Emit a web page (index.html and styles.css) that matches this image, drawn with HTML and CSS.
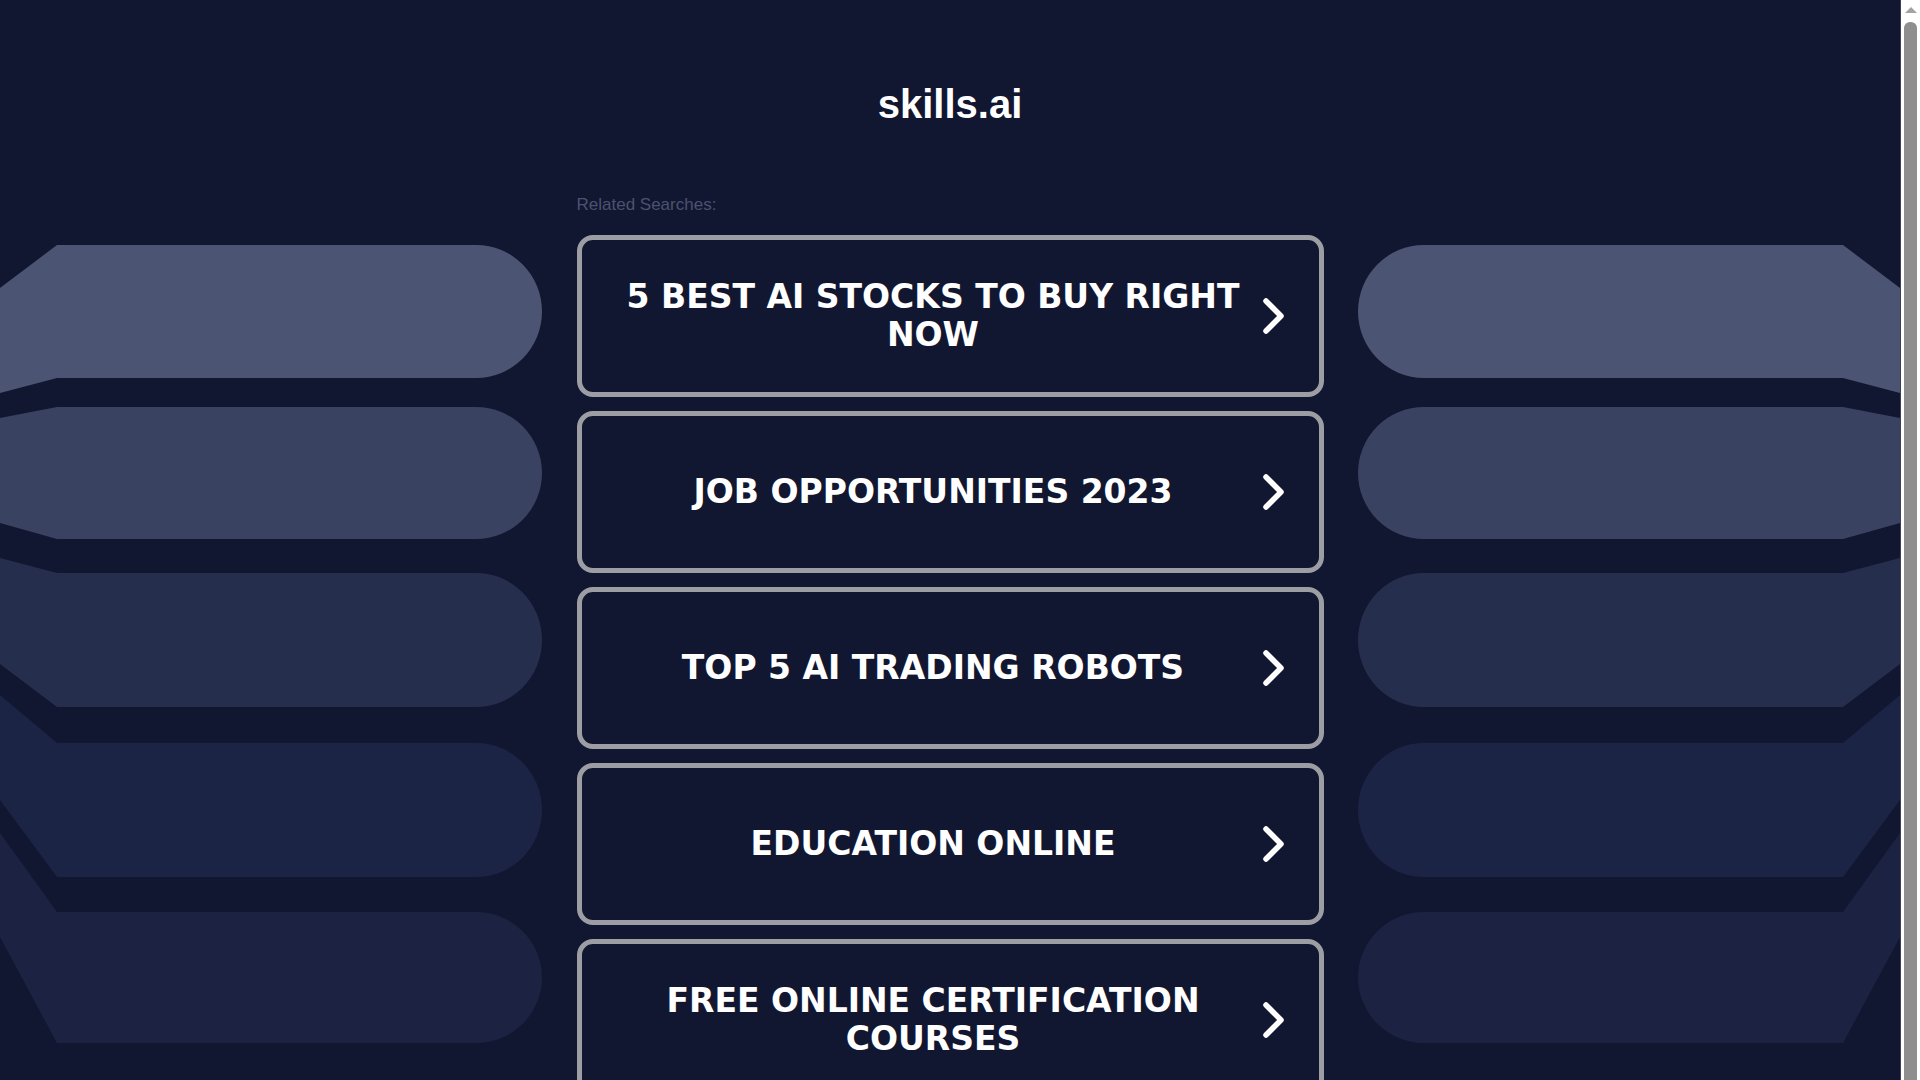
FILE: index.html
```html
<!DOCTYPE html>
<html lang="en">
<head>
  <meta charset="UTF-8" />
  <meta name="viewport" content="width=device-width, initial-scale=1" />
  <title>skills.ai</title>
  <link rel="stylesheet" href="styles.css">
</head>
<body>
  <div class="wrap">
    <!-- background pills, left side; the right side is the same svg flipped -->
    <svg class="deco deco-left" width="560" height="1100" viewBox="0 0 560 1100" aria-hidden="true">
      <path fill="#4b5573" d="M0,288 L57,245 H476 A66,66.5 0 0 1 476,378 H57 L0,393 Z" />
      <path fill="#3a4261" d="M0,418 L57,407 H476 A66,66 0 0 1 476,539 H57 L0,523 Z" />
      <path fill="#262e4e" d="M0,558 L57,573 H476 A66,67 0 0 1 476,707 H57 L0,664 Z" />
      <path fill="#1c2445" d="M0,695 L57,743 H476 A66,67 0 0 1 476,877 H57 L0,800 Z" />
      <path fill="#1c2241" d="M0,833 L57,912 H476 A66,65.5 0 0 1 476,1043 H57 L0,937 Z" />
    </svg>
    <svg class="deco deco-right" width="560" height="1100" viewBox="0 0 560 1100" aria-hidden="true">
      <path fill="#4b5573" d="M0,288 L57,245 H476 A66,66.5 0 0 1 476,378 H57 L0,393 Z" />
      <path fill="#3a4261" d="M0,418 L57,407 H476 A66,66 0 0 1 476,539 H57 L0,523 Z" />
      <path fill="#262e4e" d="M0,558 L57,573 H476 A66,67 0 0 1 476,707 H57 L0,664 Z" />
      <path fill="#1c2445" d="M0,695 L57,743 H476 A66,67 0 0 1 476,877 H57 L0,800 Z" />
      <path fill="#1c2241" d="M0,833 L57,912 H476 A66,65.5 0 0 1 476,1043 H57 L0,937 Z" />
    </svg>

    <div class="content">
      <h1 class="domain">skills.ai</h1>

      <div class="searches">
        <p class="label">Related Searches:</p>

        <a class="link" href="#">
          <span class="link-text">5 BEST AI STOCKS TO BUY RIGHT NOW</span>
          <svg class="arrow" width="24" height="38" viewBox="0 0 24 38"><path d="M4,4 L19,19 L4,34" /></svg>
        </a>
        <a class="link" href="#">
          <span class="link-text">JOB OPPORTUNITIES 2023</span>
          <svg class="arrow" width="24" height="38" viewBox="0 0 24 38"><path d="M4,4 L19,19 L4,34" /></svg>
        </a>
        <a class="link" href="#">
          <span class="link-text">TOP 5 AI TRADING ROBOTS</span>
          <svg class="arrow" width="24" height="38" viewBox="0 0 24 38"><path d="M4,4 L19,19 L4,34" /></svg>
        </a>
        <a class="link" href="#">
          <span class="link-text">EDUCATION ONLINE</span>
          <svg class="arrow" width="24" height="38" viewBox="0 0 24 38"><path d="M4,4 L19,19 L4,34" /></svg>
        </a>
        <a class="link" href="#">
          <span class="link-text">FREE ONLINE CERTIFICATION COURSES</span>
          <svg class="arrow" width="24" height="38" viewBox="0 0 24 38"><path d="M4,4 L19,19 L4,34" /></svg>
        </a>
      </div>
    </div>
  </div>

  <!-- window scrollbar -->
  <div class="scrollbar">
    <span class="sb-up"></span>
    <span class="sb-thumb"></span>
  </div>
</body>
</html>
```

FILE: styles.css
```css
html, body {
  margin: 0;
  padding: 0;
}
body {
  background-color: #121731;
  color: #fff;
  font-family: 'Liberation Sans', Arial, sans-serif;
}
.wrap {
  position: relative;
  margin-right: 20px;
  min-height: 1120px;
  overflow: hidden;
}

/* decorative pills behind the links */
.deco {
  position: absolute;
  top: 0;
}
.deco-left {
  left: 0;
}
.deco-right {
  right: 0;
  transform: scaleX(-1);
}

.content {
  position: relative;
  padding-top: 80px;
  text-align: center;
}
.domain {
  margin: 0;
  font-size: 40px;
  line-height: 48px;
  font-weight: 700;
  color: #fff;
}
.searches {
  width: 747px;
  margin: 67px auto 0;
  text-align: left;
}
.label {
  margin: 0 0 20px;
  font-size: 17px;
  line-height: 20px;
  color: #4b5270;
}

.link {
  display: flex;
  align-items: center;
  box-sizing: border-box;
  height: 162px;
  margin-bottom: 14px;
  padding: 0 33px 0 41px;
  border: 5px solid #9c9ea4;
  border-radius: 16px;
  background-color: #121731;
  color: #fff;
  text-decoration: none;
}
.link-text {
  flex: 1;
  text-align: center;
  font-family: 'DejaVu Sans', Verdana, sans-serif;
  font-weight: 700;
  font-size: 33px;
  line-height: 38px;
}
.arrow {
  flex: none;
  margin-left: 18px;
}
.arrow path {
  fill: none;
  stroke: #fff;
  stroke-width: 5.5;
  stroke-linecap: round;
  stroke-linejoin: round;
}

.scrollbar {
  position: fixed;
  top: 0;
  right: 0;
  width: 20px;
  height: 100vh;
  background-color: #fff;
  border-left: 1px solid #3a3f52;
  box-sizing: border-box;
}
.sb-up {
  position: absolute;
  top: 7px;
  left: 4px;
  width: 0;
  height: 0;
  border-left: 6px solid transparent;
  border-right: 6px solid transparent;
  border-bottom: 6px solid #a3a3a3;
}
.sb-thumb {
  position: absolute;
  top: 22px;
  bottom: 0;
  left: 3px;
  width: 13px;
  border-radius: 6px 6px 0 0;
  background-color: #8e8e8e;
}
```
